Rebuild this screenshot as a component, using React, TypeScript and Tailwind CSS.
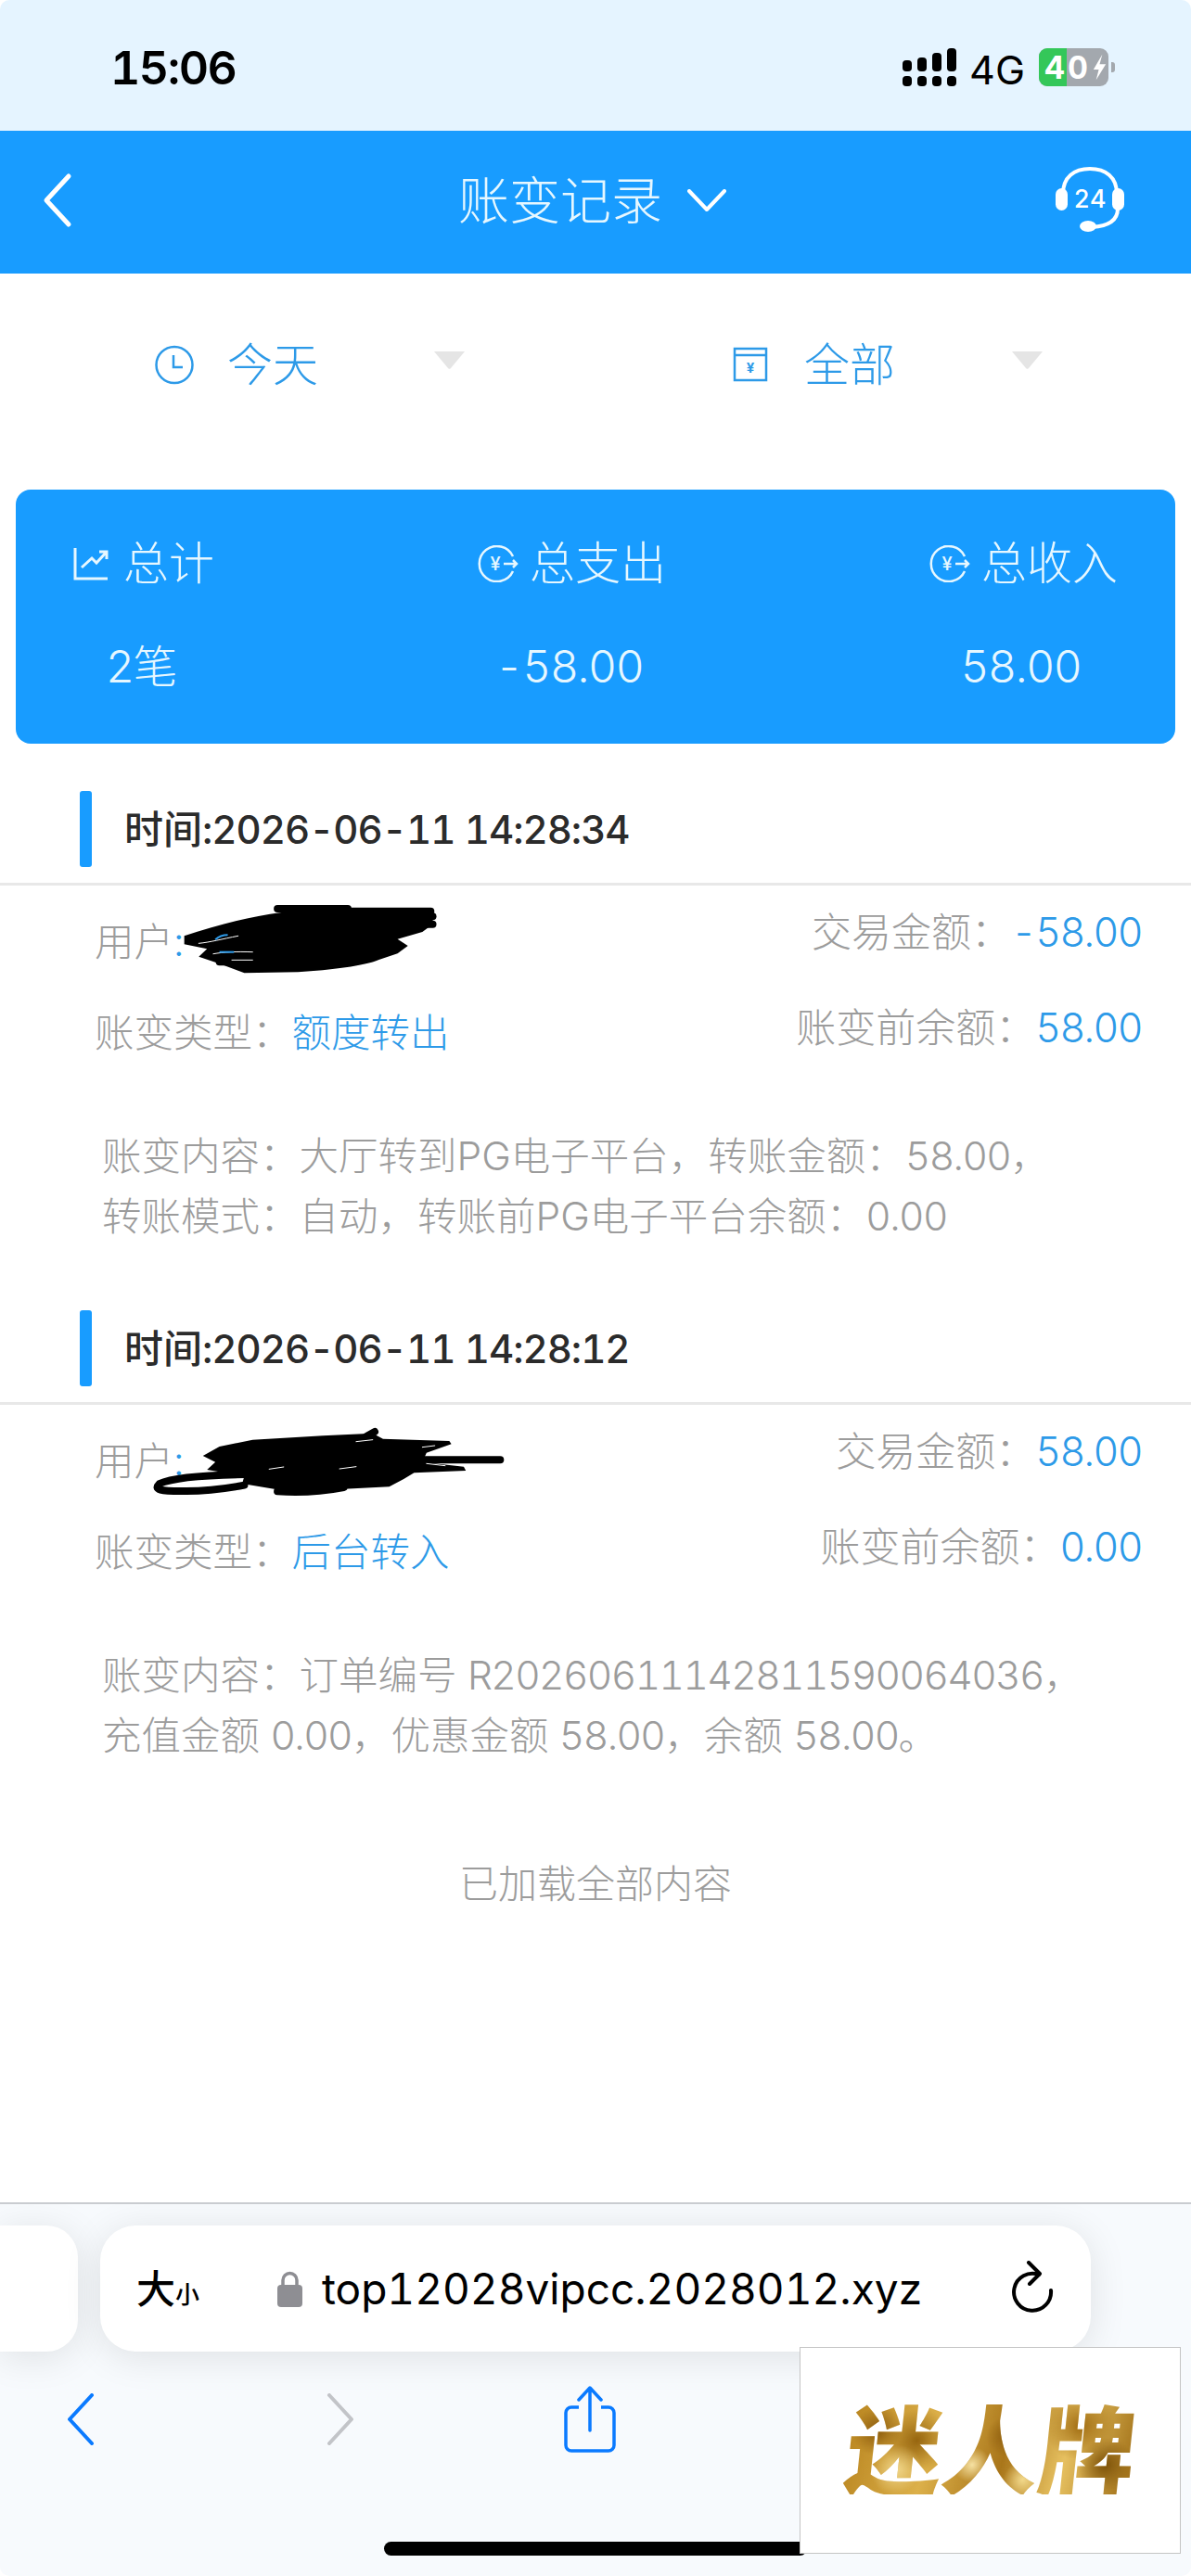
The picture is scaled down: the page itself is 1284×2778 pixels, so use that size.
const FONT = "font-['Inter','Noto_Sans_CJK_SC',sans-serif] tabular-nums"

function Mixed({ text }: { text: string }) {
  return (
    <>
      {text.split(/([0-9R.\-]+)/).map((part, i) =>
        i % 2 === 1 ? (
          <span key={i} className="tracking-[-1.6px]">{part}</span>
        ) : (
          <span key={i}>{part}</span>
        ),
      )}
    </>
  )
}

function StatusBar() {
  const bars = [12, 15, 20, 25]
  return (
    <div className="h-[141px] bg-[#e5f4ff] flex items-start pt-[44px] pl-[119px] text-black">
      <span className="w-[854px] text-[50px] leading-[58px] font-semibold tracking-[-1.5px]">15:06</span>
      {/* signal: a dot row under bars that grow to the right */}
      <div className="w-[58px] h-[41px] mt-[8px] flex items-end gap-[6px]">
        {bars.map((h, i) => (
          <div key={i} className="w-[10px] flex flex-col gap-[5px]">
            <div className="bg-black rounded-[4px]" style={{ height: h }} />
            <div className="h-[11px] bg-black rounded-[4px]" />
          </div>
        ))}
      </div>
      <span className="ml-[14px] mt-[8px] w-[58px] text-[43px] leading-[46px]">4G</span>
      <div className="ml-[17px] mt-[8px] w-[75px] h-[41px] rounded-[9px] flex bg-[#a3a8ae] text-white font-bold text-[34px] leading-[41px]">
        <div className="w-[30px] bg-[#34c759] rounded-l-[9px] pl-[6px]">4</div>
        <div className="pl-[1px] w-[26px]">0</div>
        <svg width="19" height="41" viewBox="0 0 20 41">
          <path d="M13 6 3 23h6l-3 12 11-18h-7z" fill="#fff" />
        </svg>
      </div>
      <div className="ml-[3px] mt-[23px] w-[4px] h-[11px] bg-[#a3a8ae] rounded-r-[3px]" />
    </div>
  )
}

function Header() {
  return (
    <div className="h-[154px] bg-[#189cff] relative flex items-center justify-between pl-[38px] pr-[72px] text-[#e6f7ff]">
      <svg width="48" height="60" viewBox="0 0 48 60" className="-mt-[4px]">
        <path d="M36 4 12 30l24 26" fill="none" stroke="#fff" strokeWidth="5" strokeLinecap="round" strokeLinejoin="round" />
      </svg>
      <div className="absolute left-[494px] top-[40px] flex items-center">
        <span className="text-[55px] leading-[70px] font-light w-[247px]">账变记录</span>
        <svg width="42" height="24" viewBox="0 0 42 24">
          <path d="M2 2 21 22 40 2" fill="none" stroke="#fff" strokeWidth="4" strokeLinecap="round" strokeLinejoin="round" />
        </svg>
      </div>
      <svg width="74" height="72" viewBox="0 0 74 72" className="-mt-[6px]">
        <path d="M8 30C8 12 20 3 37 3s29 9 29 27" fill="none" stroke="#fff" strokeWidth="4" />
        <rect x="0" y="24" width="13" height="24" rx="6.5" fill="#fff" />
        <rect x="61" y="24" width="13" height="24" rx="6.5" fill="#fff" />
        <path d="M67 46c0 14-12 19-28 20" fill="none" stroke="#fff" strokeWidth="4" />
        <ellipse cx="35" cy="65" rx="9" ry="6" fill="#fff" />
        <text x="37" y="45" textAnchor="middle" fontSize="27" fontWeight="500" fill="#fff" fontFamily="Inter">24</text>
      </svg>
    </div>
  )
}

function Caret() {
  return (
    <svg width="35" height="20" viewBox="0 0 35 20">
      <path d="M1 1h33L19 19a2 2 0 0 1-3 0z" fill="#e5e5e5" />
    </svg>
  )
}

function Filters() {
  return (
    <div className="h-[233px] flex items-start pt-[76px] pl-[167px] text-[#2d9ae8] text-[49px] leading-[46px]">
      <svg width="42" height="43" viewBox="0 0 42 43" className="mt-[1px]">
        <circle cx="21" cy="21.5" r="19.5" fill="none" stroke="currentColor" strokeWidth="2.5" />
        <path d="M20 11v13h10" fill="none" stroke="currentColor" strokeWidth="2.5" />
      </svg>
      <span className="ml-[36px] w-[98px] font-light">今天</span>
      <div className="ml-[124px] mt-[7px]"><Caret /></div>
      <svg width="38" height="38" viewBox="0 0 38 38" className="ml-[288px] mt-[3px]">
        <path d="M2 2h34v34H2zM2 9h34" fill="none" stroke="currentColor" strokeWidth="2.5" />
        <text x="19" y="28" textAnchor="middle" fontSize="15" fontWeight="700" fill="currentColor" fontFamily="Inter">¥</text>
      </svg>
      <span className="ml-[39px] w-[98px] font-light">全部</span>
      <div className="ml-[125px] mt-[7px]"><Caret /></div>
    </div>
  )
}

function CoinArrow() {
  return (
    <svg width="44" height="40" viewBox="0 0 44 40">
      <path d="M38 12A19 19 0 1 0 38 28" fill="none" stroke="currentColor" strokeWidth="2.5" />
      <text x="19" y="27" textAnchor="middle" fontSize="20" fontWeight="500" fill="currentColor" fontFamily="Inter">¥</text>
      <path d="M28 20h14m-4-4 4 4-4 4" fill="none" stroke="currentColor" strokeWidth="2.5" />
    </svg>
  )
}

function Summary() {
  const cols = [
    {
      label: '总计',
      value: '2笔',
      gap: 'gap-[16px]',
      icon: (
        <svg width="38" height="36" viewBox="0 0 38 36">
          <path d="M2 1v33h35M9 22 20 12l5 5L36 5m-8 0h8v8" fill="none" stroke="currentColor" strokeWidth="3" />
        </svg>
      ),
    },
    { label: '总支出', value: '-58.00', gap: 'gap-[12px]', icon: <CoinArrow /> },
    { label: '总收入', value: '58.00', gap: 'gap-[12px]', icon: <CoinArrow /> },
  ]
  return (
    <div className="mx-[17px] h-[274px] rounded-[16px] bg-[#189cff] flex justify-between px-[62px] pt-[50px] text-[#e6f7ff] text-[49px]">
      {cols.map((c) => (
        <div key={c.label} className="flex flex-col items-center">
          <div className={`flex items-center h-[60px] ${c.gap}`}>
            {c.icon}
            <span className="font-light">{c.label}</span>
          </div>
          <div className="mt-[51px] pr-[6px] h-[60px] leading-[60px] font-light text-[48px] tracking-[-1.4px]">{c.value}</div>
        </div>
      ))}
    </div>
  )
}

type ScribbleData = { blob: string; strokes: string[]; bits: string[]; slits: string[] }

function Scribble({ blob, strokes, bits, slits }: ScribbleData) {
  // masking drawn over the account name
  return (
    <svg
      width="700"
      height="320"
      viewBox="0 0 1568 960"
      preserveAspectRatio="none"
      className="absolute left-0 -top-[13px] pointer-events-none"
    >
      <path d={blob} fill="#000" />
      {strokes.map((d, i) => (
        <path key={i} d={d} fill="none" stroke="#000" strokeWidth="8" strokeLinecap="round" strokeLinejoin="round" vectorEffect="non-scaling-stroke" />
      ))}
      {slits.map((d, i) => (
        <path key={i} d={d} fill="none" stroke="#fff" strokeWidth="1" strokeLinecap="round" vectorEffect="non-scaling-stroke" />
      ))}
      {bits.map((d, i) => (
        <path key={i} d={d} fill="none" stroke="#2d9ae8" strokeWidth="2" vectorEffect="non-scaling-stroke" />
      ))}
    </svg>
  )
}

type RecordProps = {
  time: string
  amount: string
  balance: string
  type: string
  lines: string[]
  scribble: ScribbleData
}

function TxRecord({ time, amount, balance, type, lines, scribble }: RecordProps) {
  return (
    <div className="relative h-[560px]">
      <div className="flex items-center pl-[86px] h-[82px] gap-[35px]">
        <div className="w-[13px] h-[82px] bg-[#189cff] rounded-[3px]" />
        <span className="text-[42px] font-medium text-[#2b2b2b]">
          时间<span className="tracking-[-1px]">:{time}</span>
        </span>
      </div>
      <div className="mt-[17px] h-[3px] bg-[#e8e8e8]" />
      <div className="flex justify-between pl-[102px] pr-[53px] text-[42.500px] text-[#9c9c9c]">
        <div>
          <div className="mt-[31px] h-[60px] leading-[60px] font-light">
            用户<span className="text-[#2d9ae8]">:</span>
          </div>
          <div className="mt-[38px] h-[60px] leading-[60px] font-light">
            账变类型：<span className="text-[#2d9ae8]">{type}</span>
          </div>
        </div>
        <div className="flex flex-col items-end text-[43px]">
          <div className="mt-[20px] h-[60px] leading-[60px] font-light">
            交易金额：<span className="text-[#2d9ae8] tracking-[-1.6px]">{amount}</span>
          </div>
          <div className="mt-[43px] h-[60px] leading-[60px] font-light">
            账变前余额：<span className="text-[#2d9ae8] tracking-[-1.6px]">{balance}</span>
          </div>
        </div>
      </div>
      <div className="mt-[70px] pl-[110px] text-[42.500px] leading-[65px] text-[#9c9c9c] font-light">
        {lines.map((l) => (
          <div key={l}><Mixed text={l} /></div>
        ))}
      </div>
      <Scribble {...scribble} />
    </div>
  )
}

const scribbleOne: ScribbleData = {
  blob: 'M445 508C520 475 600 445 680 432L850 424 1030 430 1045 445 1045 470 1020 495 960 518 985 540 960 565 915 585C880 605 800 618 720 625L590 628 530 598 480 575 500 550 445 535z',
  strokes: [
    'M670 420H840',
    'M850 428H1040',
    'M860 445H1045',
    'M850 470H1045',
    'M530 592H640',
  ],
  slits: ['M480 532C510 528 535 518 575 508', 'M515 566C540 560 570 558 610 560', 'M560 586H610'],
  bits: ['M520 520C528 510 535 505 550 505', 'M530 560H565'],
}

const scribbleTwo: ScribbleData = {
  blob: 'M530 480 610 458 780 445 900 437 925 455 1085 462 1090 472 1030 500 1020 530 1120 545 1125 558 1000 565 975 585 940 610 820 618 680 630 665 618 585 600 590 575 500 555 520 530 490 510z',
  strokes: [
    'M905 432 885 447',
    'M1020 523H1208',
    'M590 570C500 572 420 578 385 600 370 620 385 625 450 624 510 624 550 615 590 605',
    'M670 625C720 630 780 625 830 612',
  ],
  slits: ['M860 464 900 458', 'M1020 482 1050 477', 'M820 552 860 545', 'M650 553 685 546', 'M1030 535 1075 542'],
  bits: [],
}

function Watermark() {
  return (
    <div className="absolute left-[862px] top-[154px] w-[411px] h-[223px] bg-white border-[1.5px] border-[#c4c4c4] flex items-center justify-center">
      <span className="font-['Noto_Sans_CJK_SC',sans-serif] font-black text-[104px] leading-[106px] -skew-x-6 -mt-[12px] ml-[4px] whitespace-nowrap bg-[radial-gradient(circle_at_10%_35%,#8a5a0c_0%,transparent_9%),radial-gradient(circle_at_18%_75%,#f0d68a_0%,transparent_10%),radial-gradient(circle_at_24%_45%,#96650f_0%,transparent_14%),radial-gradient(circle_at_44%_70%,#f6e2a4_0%,transparent_10%),radial-gradient(circle_at_55%_40%,#8f5f10_0%,transparent_12%),radial-gradient(circle_at_62%_85%,#f2d98c_0%,transparent_10%),radial-gradient(circle_at_80%_30%,#a06c12_0%,transparent_14%),radial-gradient(circle_at_90%_70%,#7d5209_0%,transparent_10%),linear-gradient(100deg,#b8841f,#dcb04a_30%,#a9761a_55%,#e6c060_75%,#9d6c14)] bg-clip-text text-transparent">
        迷人牌
      </span>
    </div>
  )
}

function NavChevron({ d, color }: { d: string; color: string }) {
  return (
    <svg width="30" height="56" viewBox="0 0 30 56">
      <path d={d} fill="none" stroke={color} strokeWidth="4" strokeLinecap="round" strokeLinejoin="round" />
    </svg>
  )
}

function SafariBar() {
  return (
    <div className="relative h-[403px] border-t-2 border-[#c9ccd0] bg-[#f7fafd] overflow-hidden">
      <div className="flex mt-[23px] gap-[24px]">
        <div className="w-[84px] h-[136px] bg-white rounded-r-[34px] shadow-[0_6px_40px_rgba(0,0,0,0.1)]" />
        <div className="w-[1068px] h-[136px] bg-white rounded-[38px] shadow-[0_6px_40px_rgba(0,0,0,0.1)] flex items-center pl-[39px] text-black">
          <span className="w-[76px] flex items-baseline">
            <span className="text-[42px] font-medium">大</span>
            <span className="text-[26px] font-medium">小</span>
          </span>
          <svg width="27" height="40" viewBox="0 0 27 40" className="ml-[76px]">
            <path d="M6 18v-7a7.500 7.500 0 0 1 15 0v7" fill="none" stroke="#8e8e93" strokeWidth="3.500" />
            <rect x="0" y="16" width="27" height="24" rx="4" fill="#8e8e93" />
          </svg>
          <span className="ml-[21px] w-[648px] text-[46px] whitespace-nowrap">top12028vipcc.2028012.xyz</span>
          <svg width="46" height="56" viewBox="0 0 46 56" className="ml-[95px] -mt-[4px]">
            <path d="M30 15A20 20 0 1 0 43 32" fill="none" stroke="#000" strokeWidth="4" strokeLinecap="round" />
            <path d="M19 2 31 14 20 25" fill="none" stroke="#000" strokeWidth="4" strokeLinecap="round" strokeLinejoin="round" />
          </svg>
        </div>
      </div>
      <div className="flex items-center mt-[37px] h-[72px]">
        <div className="ml-[72px]"><NavChevron d="M27 2 3 28l24 26" color="#0a7aff" /></div>
        <div className="ml-[250px]"><NavChevron d="M3 2l24 26L3 54" color="#c2c4c8" /></div>
        <svg width="56" height="72" viewBox="0 0 56 72" className="ml-[226px]">
          <path d="M16 23H8a6 6 0 0 0-6 6v35a6 6 0 0 0 6 6h40a6 6 0 0 0 6-6V29a6 6 0 0 0-6-6h-8" fill="none" stroke="#0a7aff" strokeWidth="3.500" />
          <path d="M28 48V3M16 15 28 2l12 13" fill="none" stroke="#0a7aff" strokeWidth="3.500" strokeLinecap="round" strokeLinejoin="round" />
        </svg>
      </div>
      <div className="ml-[414px] mt-[96px] w-[456px] h-[15px] bg-black rounded-full" />
      <Watermark />
    </div>
  )
}

export default function App() {
  return (
    <div className={`${FONT} w-[1284px] h-[2778px] bg-white flex flex-col overflow-hidden rounded-[10px]`}>
      <StatusBar />
      <Header />
      <Filters />
      <Summary />
      <div className="flex-1 pt-[51px]">
        <TxRecord
          time="2026-06-11 14:28:34"
          amount="-58.00"
          balance="58.00"
          type="额度转出"
          lines={['账变内容：大厅转到PG电子平台，转账金额：58.00，', '转账模式：自动，转账前PG电子平台余额：0.00']}
          scribble={scribbleOne}
        />
        <TxRecord
          time="2026-06-11 14:28:12"
          amount="58.00"
          balance="0.00"
          type="后台转入"
          lines={['账变内容：订单编号 R20260611142811590064036，', '充值金额 0.00，优惠金额 58.00，余额 58.00。']}
          scribble={scribbleTwo}
        />
        <div className="mt-[29px] text-center text-[42px] font-light text-[#9c9c9c] leading-[60px]">已加载全部内容</div>
      </div>
      <SafariBar />
    </div>
  )
}
